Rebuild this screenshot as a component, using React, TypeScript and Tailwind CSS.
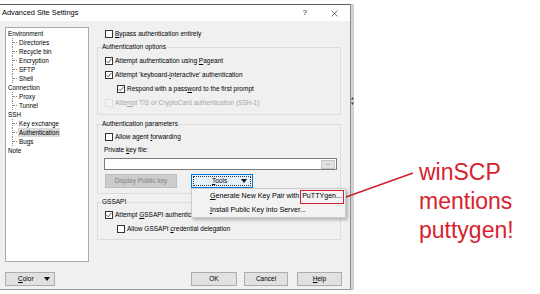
import type { ReactNode } from "react";

const treeItems: { label: string; level: number; selected?: boolean }[] = [
    { label: "Environment", level: 0 },
    { label: "Directories", level: 1 },
    { label: "Recycle bin", level: 1 },
    { label: "Encryption", level: 1 },
    { label: "SFTP", level: 1 },
    { label: "Shell", level: 1 },
    { label: "Connection", level: 0 },
    { label: "Proxy", level: 1 },
    { label: "Tunnel", level: 1 },
    { label: "SSH", level: 0 },
    { label: "Key exchange", level: 1 },
    { label: "Authentication", level: 1, selected: true },
    { label: "Bugs", level: 1 },
    { label: "Note", level: 0 },
];

function Box({ checked, disabled }: { checked?: boolean; disabled?: boolean }) {
    return (
        <span
            className={
                disabled
                    ? "w-[8px] h-[8px] border border-[#dedede] bg-[#f3f3f3] shrink-0"
                    : "w-[8px] h-[8px] border border-[#333] bg-white shrink-0 flex items-center justify-center"
            }
        >
            {checked && (
                <svg width="6" height="6" viewBox="0 0 6 6">
                    <path d="M0.6 3.1 L2.3 4.8 L5.4 0.9" fill="none" stroke="#333" strokeWidth="0.8" />
                </svg>
            )}
        </span>
    );
}

function CheckRow({ children, checked, disabled, indent }: { children: ReactNode; checked?: boolean; disabled?: boolean; indent?: boolean }) {
    return (
        <div className={`flex items-center h-[14px] gap-[2px] ${indent ? "pl-[19px]" : "pl-[7px]"}`}>
            <Box checked={checked} disabled={disabled} />
            <span className={disabled ? "text-[#a6a6a6]" : "text-black"}>{children}</span>
        </div>
    );
}

function Group({ title, children, className }: { title: string; children: ReactNode; className?: string }) {
    return (
        <fieldset className={`border border-[#dcdcdc] ${className ?? ""}`}>
            <legend className="ml-[3px] px-[1px] leading-[8px] text-black">{title}</legend>
            {children}
        </fieldset>
    );
}

function WinButton({ children, className }: { children: ReactNode; className?: string }) {
    return (
        <div className={`h-[14px] border border-[#adadad] bg-[#e1e1e1] flex items-center justify-center text-black ${className ?? ""}`}>
            {children}
        </div>
    );
}

export default function App() {
    return (
        <div className="relative w-[540px] h-[294px] bg-white overflow-hidden flex font-['Liberation_Sans',Arial,sans-serif] text-[6.5px] leading-none">
            {/* Dialog */}
            <div className="mt-[4px] w-[351px] h-[286px] border-t border-t-[#5c5c5c] border-r border-r-[#8c8c8c] border-b border-b-[#9a9a9a] flex flex-col">
                {/* Title bar */}
                <div className="h-[16px] bg-white flex items-center pl-[2px] shrink-0">
                    <span className="text-[7.4px] text-black">Advanced Site Settings</span>
                    <span className="ml-auto text-[7.5px] text-[#222]">?</span>
                    <svg className="ml-[24px] mr-[12px]" width="7" height="7" viewBox="0 0 7 7">
                        <path d="M0.5 0.5 L6.5 6.5 M6.5 0.5 L0.5 6.5" stroke="#333" strokeWidth="0.7" />
                    </svg>
                </div>

                {/* Body */}
                <div className="h-[268px] bg-[#f0f0f0] flex flex-col pl-[5px] pr-[5px]">
                    <div className="flex pt-[6px]">
                        {/* Tree */}
                        <div className="w-[84px] h-[235px] border border-[#a9a9a9] bg-white pt-[0.5px] text-[6.3px] leading-[9px] text-black">
                            {treeItems.map((item) =>
                                item.level === 0 ? (
                                    <div key={item.label} className="h-[9px] pl-[2px]">{item.label}</div>
                                ) : (
                                    <div key={item.label} className="h-[9px] flex items-center pl-[6px]">
                                        <span className="w-[1px] h-[9px] border-l border-dotted border-[#8a8a8a]" />
                                        <span className="w-[4px] border-t border-dotted border-[#8a8a8a]" />
                                        <span className={`ml-[1px] px-[1px] ${item.selected ? "bg-[#d9d9d9]" : ""}`}>{item.label}</span>
                                    </div>
                                )
                            )}
                        </div>

                        {/* Right column */}
                        <div className="ml-[8px] w-[244px] flex flex-col">
                            <div className="flex items-center h-[14px] gap-[2px] pl-[8px]">
                                <Box />
                                <span><span className="underline">B</span>ypass authentication entirely</span>
                            </div>

                            <Group title="Authentication options" className="mt-[2px]">
                                <div className="pt-[3px] pb-[4px]">
                                    <CheckRow checked>Attempt authentication using <span className="underline">P</span>ageant</CheckRow>
                                    <CheckRow checked>Attempt 'keyboard-<span className="underline">i</span>nteractive' authentication</CheckRow>
                                    <CheckRow checked indent>Respond with a pass<span className="underline">w</span>ord to the first prompt</CheckRow>
                                    <CheckRow disabled>Atte<span className="underline">m</span>pt TIS or CryptoCard authentication (SSH-1)</CheckRow>
                                </div>
                            </Group>

                            <Group title="Authentication parameters" className="mt-[5px]">
                                <div className="pt-[2px] pb-[5px]">
                                    <CheckRow>Allow agent <span className="underline">f</span>orwarding</CheckRow>
                                    <div className="mt-[2px] h-[8px] flex items-center pl-[6px]">
                                        <span>Private <span className="underline">k</span>ey file:</span>
                                    </div>
                                    <div className="mt-[4px] ml-[6px] w-[233px] h-[12px] border border-[#7a7a7a] bg-white flex items-center justify-end pr-[1px]">
                                        <div className="w-[14px] h-[9px] bg-[#e1e1e1] border border-[#c4c4c4] flex items-center justify-center text-[6px] text-black pb-[2px]">...</div>
                                    </div>
                                    <div className="mt-[4px] flex pl-[7px]">
                                        <div className="w-[72px] h-[14px] bg-[#cccccc] border border-[#bfbfbf] flex items-center justify-center text-[#838383]">Display Public key</div>
                                        <div className="relative ml-[14px]">
                                            <div className="w-[62px] h-[14px] border border-[#0078d7] bg-[#e5f1fb] p-[1px]">
                                                <div className="w-full h-full border border-dotted border-[#333] flex items-center pl-[18px] pr-[3px]">
                                                    <span className="text-black"><span className="underline">T</span>ools</span>
                                                    <svg className="ml-auto" width="6" height="4" viewBox="0 0 6 4">
                                                        <path d="M0 0 H6 L3 4 Z" fill="#111" />
                                                    </svg>
                                                </div>
                                            </div>
                                            {/* Dropdown menu */}
                                            <div className="absolute left-0 top-full z-10 w-[155px] h-[30px] bg-[#f2f2f2] border border-[#cccccc] shadow-[2px_2px_3px_rgba(0,0,0,0.25)] pt-[1px] text-[7.1px] text-black">
                                                <div className="h-[14px] flex items-center pl-[18px]">
                                                    <span><span className="underline">G</span>enerate New Key Pair with </span>
                                                    <span className="ml-[1px] border-[1.5px] border-[#d4202c] px-[1px] py-[2px] leading-none">PuTTYgen...</span>
                                                </div>
                                                <div className="h-[14px] flex items-center pl-[18px]">
                                                    <span><span className="underline">I</span>nstall Public Key into Server...</span>
                                                </div>
                                            </div>
                                        </div>
                                    </div>
                                </div>
                            </Group>

                            <Group title="GSSAPI" className="mt-[4px]">
                                <div className="pt-[2px] pb-[3px]">
                                    <CheckRow checked>Attempt <span className="underline">G</span>SSAPI authentication</CheckRow>
                                    <CheckRow indent>Allow GSSAPI <span className="underline">c</span>redential delegation</CheckRow>
                                </div>
                            </Group>
                        </div>
                    </div>

                    {/* Bottom buttons */}
                    <div className="mt-[10px] flex">
                        <WinButton className="w-[50px] justify-start pl-[12px] pr-[4px]">
                            <span><span className="underline">C</span>olor</span>
                            <svg className="ml-auto" width="6" height="4" viewBox="0 0 6 4">
                                <path d="M0 0 H6 L3 4 Z" fill="#111" />
                            </svg>
                        </WinButton>
                        <WinButton className="ml-[136px] w-[46px]">OK</WinButton>
                        <WinButton className="ml-[7px] w-[44px]">Cancel</WinButton>
                        <WinButton className="ml-[9px] w-[45px]"><span><span className="underline">H</span>elp</span></WinButton>
                    </div>
                </div>
            </div>

            {/* Edge of the window behind */}
            <div className="mt-[4px] w-[3px] h-[286px] bg-[#d2d2d2] flex flex-col items-center pt-[93px]">
                <svg width="3" height="8" viewBox="0 0 3 8">
                    <path d="M1.5 0 L3 2.5 H0 Z M1.5 8 L3 5.5 H0 Z" fill="#444" />
                </svg>
            </div>

            {/* Annotation */}
            <div className="ml-[65px] pt-[158px] text-[23px] leading-[29px] text-[#d6222e]">
                <div>winSCP</div>
                <div>mentions</div>
                <div>puttygen!</div>
            </div>

            <svg className="absolute left-0 top-0 pointer-events-none" width="540" height="294" viewBox="0 0 540 294">
                <line x1="346" y1="197" x2="413" y2="173" stroke="#d4202c" strokeWidth="1.6" />
            </svg>
        </div>
    );
}
